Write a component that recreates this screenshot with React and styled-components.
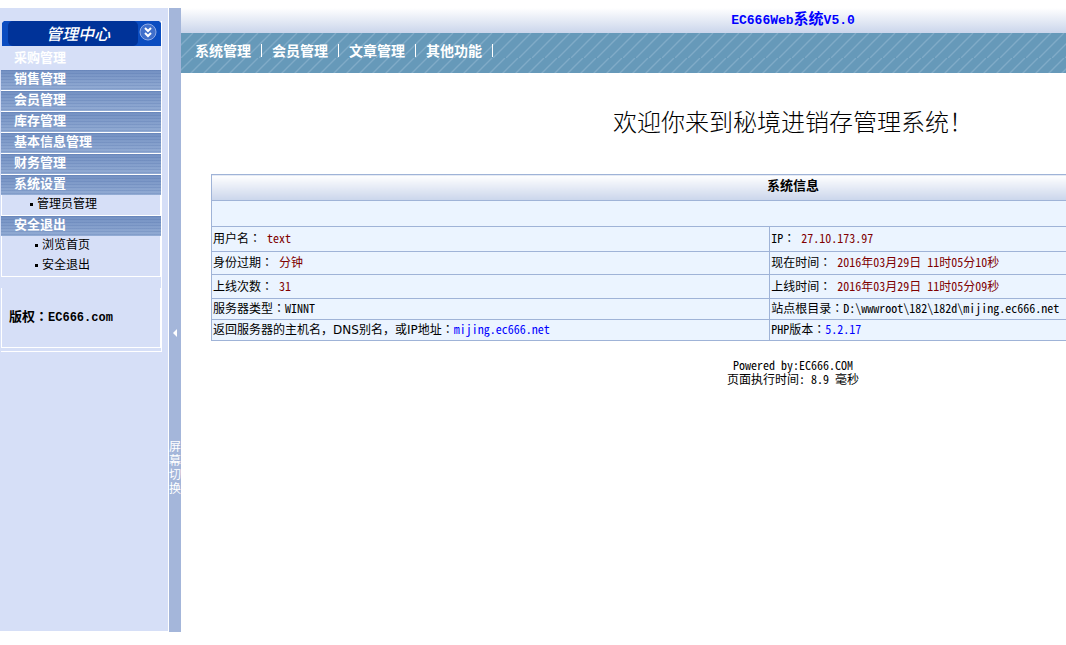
import styled, { createGlobalStyle } from "styled-components"

const GlobalStyle = createGlobalStyle`
  * {
    box-sizing: border-box;
  }
  body {
    margin: 0;
    background-color: #ffffff;
    color: #000000;
    font-family: "Noto Sans CJK SC", sans-serif;
    font-feature-settings: "hwid";
    font-size: 12px;
    line-height: 14px;
  }
  a {
    color: inherit;
    text-decoration: none;
  }
`
const Page = styled.div`
  display: flex;
  align-items: flex-start;
  min-height: 100vh;
  padding-top: 8px;
  overflow: hidden;
`
const SideBar = styled.aside`
  flex: 0 0 169px;
  min-height: calc(100vh - 22px);
  padding-top: 13px;
  background-color: #d6dff7;
  border-right: 1px solid #ffffff;
`
const MenuBox = styled.div`
  width: 162px;
  padding-left: 1px;
  border-right: 1px solid #ffffff;
`
const Banner = styled.svg`
  display: block;
  width: 160px;
  height: 25px;
`
const BannerText = styled.text`
  font-family: "Noto Sans CJK SC", sans-serif;
  font-size: 16px;
  font-weight: 500;
  font-style: italic;
  fill: #ffffff;
`
const MenuTitle = styled.a`
  display: block;
  height: ${props => (props.$open ? 20 : 21)}px;
  padding-left: 13px;
  border-bottom: ${props => (props.$open ? "none" : "1px solid #ffffff")};
  background: repeating-linear-gradient(rgba(50, 84, 150, 0.15) 0 1px, transparent 1px 3px),
    linear-gradient(#7390c2, #93acd4);
  color: #ffffff;
  font-size: 13px;
  font-weight: 700;
  line-height: 16px;
`
const MenuCurrent = styled(MenuTitle)`
  height: 24px;
  background: #d6dff7;
  border-bottom: 1px solid #d6dff7;
  line-height: 22px;
`
const SubMenu = styled.ul`
  margin: 0;
  padding: 0;
  list-style: none;
  border: 1px solid #ffffff;
  border-top: none;
`
const SubItem = styled.li`
  height: 20px;
  padding-left: ${props => props.$indent}px;
  line-height: 16px;
  display: flex;
  gap: 4px;

  &::before {
    content: "";
    width: 3px;
    height: 3px;
    margin-top: 8px;
    background-color: #000000;
  }
`
const Copyright = styled.div`
  height: 60px;
  margin-top: 11px;
  padding: 20px 7px;
  border: 1px solid #ffffff;
  border-top: none;
  font-size: 13px;
  font-weight: 700;
  line-height: 16px;
  white-space: nowrap;
`
const MenuEnd = styled.div`
  height: 4px;
  border-bottom: 1px solid #ffffff;
`
const Switch = styled.button`
  flex: 0 0 12px;
  min-height: calc(100vh - 21px);
  padding: 184px 0 0;
  border: none;
  background-color: #a4b6da;
  color: #ffffff;
  font: 12px/14px "Noto Sans CJK SC", sans-serif;
  display: flex;
  flex-direction: column;
  align-items: center;
  justify-content: center;
  gap: 102px;
`
const SwitchText = styled.span`
  width: 12px;
`
const Main = styled.main`
  flex: 1 0 1224px;
`
const TopBar = styled.header`
  height: 25px;
  background: linear-gradient(#ffffff, #cad5eb);
  color: #0000ff;
  font-size: 15px;
  font-weight: 700;
  line-height: 20px;
  text-align: center;
`
const Nav = styled.nav`
  height: 40px;
  padding-left: 14px;
  background-color: #6699b9;
  color: #ffffff;
  font-size: 14px;
  font-weight: 700;
  line-height: 34px;
  position: relative;
`
const NavLines = styled.svg`
  position: absolute;
  inset: 0;
  width: 100%;
  height: 100%;
`
const NavList = styled.ul`
  margin: 0;
  padding: 0;
  list-style: none;
  position: relative;
  display: flex;
`
const NavItem = styled.li`
  display: flex;
  align-items: center;

  &::after {
    content: "";
    width: 1px;
    height: 13px;
    margin: 0 10px;
    background-color: #ffffff;
  }
`
const Welcome = styled.h1`
  margin: 28px 0 34px;
  font-size: 24px;
  font-weight: 300;
  line-height: 39px;
  text-align: center;
`
const InfoTable = styled.table`
  width: calc(100% - 60px);
  margin: 0 30px;
  border-collapse: collapse;
  table-layout: fixed;
`
const InfoHead = styled.th`
  height: 26px;
  padding: 0 0 5px;
  border: 1px solid #9fb3d7;
  background: linear-gradient(#ffffff, #cad5eb);
  font-size: 13px;
  line-height: 18px;
`
const InfoCell = styled.td`
  height: ${props => props.$height}px;
  padding: 0 1px 2px;
  border: 1px solid #9fb3d7;
  background-color: #ebf4ff;
  white-space: nowrap;
`
const Colon = styled.span`
  font-family: "Noto Sans CJK TC", sans-serif;
  font-feature-settings: normal;
`
const Comma = styled.span`
  font-feature-settings: normal;
`
const Value = styled.span`
  margin-left: 6px;
  color: #800000;
`
const Link = styled.a`
  && {
    color: #0000ff;
  }
`
const Plain = styled.span`
  font-family: "DejaVu Sans", sans-serif;
`
const Code = styled.span`
  font-family: "Liberation Mono", monospace;
  font-size: ${props => props.$size}px;
`
const Footer = styled.footer`
  margin-top: 17px;
  line-height: 14px;
  text-align: center;
`

const App = () => {
  return (
    <>
      <GlobalStyle />
      <Page>
        <SideBar>
          <MenuBox>
            <Banner viewBox="0 0 160 25">
              <path d="M1 25V2L3 0H158L160 2V25Z" fill="#0a4cc0" />
              <rect x="7" y="0" width="130" height="25" rx="5" fill="#003399" />
              <BannerText x="45" y="19">管理中心</BannerText>
              <circle cx="147" cy="11" r="8" fill="#3f6fcb" stroke="#8fabe6" />
              <path d="M144 7l3 3 3-3M144 12l3 3 3-3" fill="none" stroke="#ffffff" strokeWidth="2" />
            </Banner>
            <MenuCurrent href="#">采购管理</MenuCurrent>
            <MenuTitle href="#">销售管理</MenuTitle>
            <MenuTitle href="#">会员管理</MenuTitle>
            <MenuTitle href="#">库存管理</MenuTitle>
            <MenuTitle href="#">基本信息管理</MenuTitle>
            <MenuTitle href="#">财务管理</MenuTitle>
            <MenuTitle href="#" $open>系统设置</MenuTitle>
            <SubMenu>
              <SubItem $indent={28}><a href="#">管理员管理</a></SubItem>
            </SubMenu>
            <MenuTitle href="#" $open>安全退出</MenuTitle>
            <SubMenu>
              <SubItem $indent={33}><a href="#">浏览首页</a></SubItem>
              <SubItem $indent={33}><a href="#">安全退出</a></SubItem>
            </SubMenu>
            <Copyright>
              版权<Colon>：</Colon><Code $size={12}>EC666.com</Code>
            </Copyright>
            <MenuEnd />
          </MenuBox>
        </SideBar>
        <Switch type="button">
          <svg width="5" height="8" viewBox="0 0 5 8">
            <path d="M0 4L4 0V8Z" fill="#ffffff" />
          </svg>
          <SwitchText>屏幕切换</SwitchText>
        </Switch>
        <Main>
          <TopBar>
            <Code $size={13}>EC666Web</Code>系统<Code $size={13}>V5.0</Code>
          </TopBar>
          <Nav>
            <NavLines>
              <defs>
                <pattern id="stripes" width="13" height="25" patternUnits="userSpaceOnUse">
                  <path d="M-13 25L12 0M0 25L25 0M-26 25L-1 0" stroke="#80abc7" strokeWidth="1.4" />
                </pattern>
              </defs>
              <rect width="100%" height="100%" fill="url(#stripes)" />
            </NavLines>
            <NavList>
              <NavItem><a href="#">系统管理</a></NavItem>
              <NavItem><a href="#">会员管理</a></NavItem>
              <NavItem><a href="#">文章管理</a></NavItem>
              <NavItem><a href="#">其他功能</a></NavItem>
            </NavList>
          </Nav>
          <Welcome>欢迎你来到秘境进销存管理系统！</Welcome>
          <InfoTable>
            <colgroup>
              <col width="48%" />
              <col width="52%" />
            </colgroup>
            <thead>
              <tr>
                <InfoHead colSpan={2}>系统信息</InfoHead>
              </tr>
            </thead>
            <tbody>
              <tr>
                <InfoCell colSpan={2} $height={26} />
              </tr>
              <tr>
                <InfoCell $height={25}>用户名<Colon>：</Colon><Value>text</Value></InfoCell>
                <InfoCell>IP<Colon>：</Colon><Value>27.10.173.97</Value></InfoCell>
              </tr>
              <tr>
                <InfoCell $height={23}>身份过期<Colon>：</Colon><Value>分钟</Value></InfoCell>
                <InfoCell>现在时间<Colon>：</Colon><Value>2016年03月29日 11时05分10秒</Value></InfoCell>
              </tr>
              <tr>
                <InfoCell $height={24}>上线次数<Colon>：</Colon><Value>31</Value></InfoCell>
                <InfoCell>上线时间<Colon>：</Colon><Value>2016年03月29日 11时05分09秒</Value></InfoCell>
              </tr>
              <tr>
                <InfoCell $height={21}>服务器类型<Colon>：</Colon>WINNT</InfoCell>
                <InfoCell>站点根目录<Colon>：</Colon>D:\wwwroot\182\182d\mijing.ec666.net</InfoCell>
              </tr>
              <tr>
                <InfoCell $height={21}>
                  返回服务器的主机名<Comma>，</Comma><Plain>DNS</Plain>别名<Comma>，</Comma>或<Plain>IP</Plain>地址<Colon>：</Colon>
                  <Link href="#">mijing.ec666.net</Link>
                </InfoCell>
                <InfoCell>PHP版本<Colon>：</Colon><Link href="#">5.2.17</Link></InfoCell>
              </tr>
            </tbody>
          </InfoTable>
          <Footer>
            Powered by:EC666.COM
            <br />
            页面执行时间: 8.9 毫秒
          </Footer>
        </Main>
      </Page>
    </>
  )
}

export default App
